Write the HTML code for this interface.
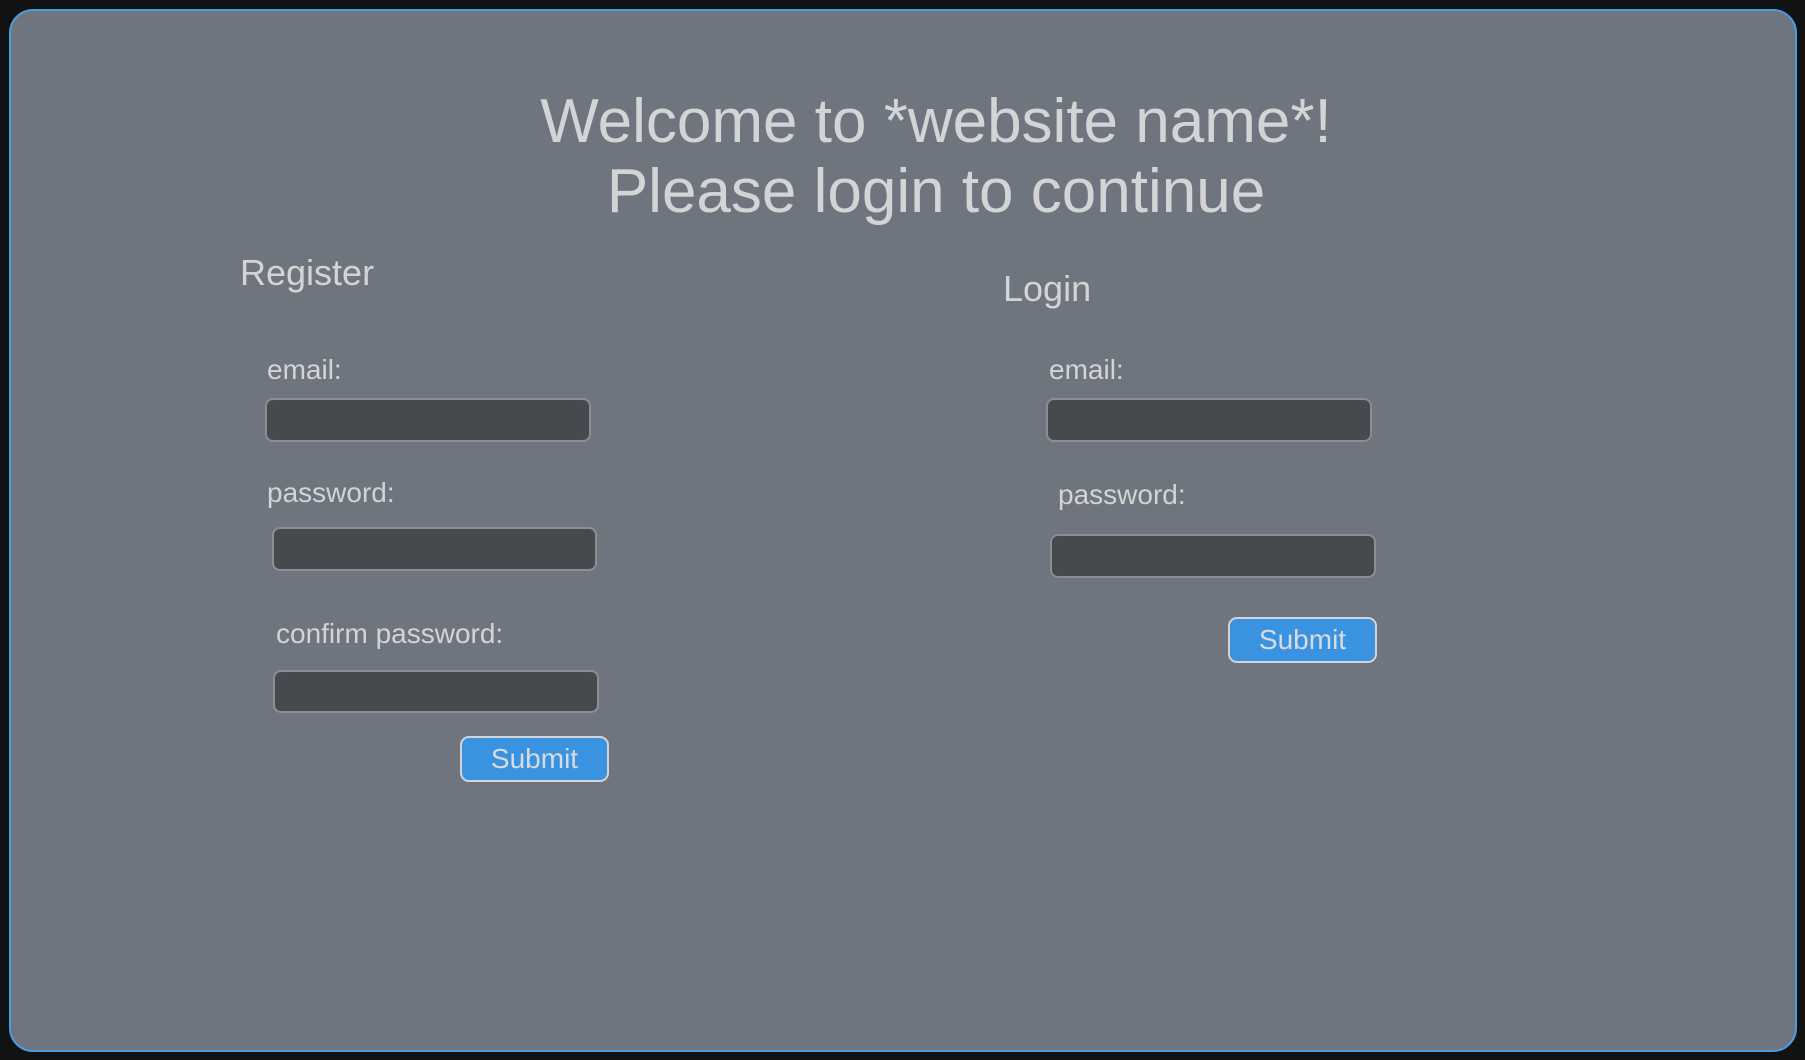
<!DOCTYPE html>
<html><head><meta charset="utf-8"><style>
html,body{margin:0;padding:0;background:#111212;width:1805px;height:1060px;overflow:hidden;font-family:"Liberation Sans",Arial,sans-serif;color:#d3d4d6}
.frame{position:absolute;left:9px;top:9px;width:1784px;height:1039px;border:2px solid #4a9be0;border-radius:24px;background:#6f757e}
.t{position:absolute;white-space:nowrap;line-height:normal}
.title{font-size:62px;left:436px;width:1000px;text-align:center}
.h{font-size:36px}
.l{font-size:28px}
.in{position:absolute;background:#464a4f;border:2px solid #8b8e93;border-radius:8px;box-sizing:border-box}
.btn{position:absolute;background:#3a93e0;border:2px solid #d3d3d5;border-radius:9px;box-sizing:border-box;font-size:28px;text-align:center;color:#d8dade}
</style></head><body>
<div class="frame"></div>
<div class="t title" style="top:86px">Welcome to *website name*!</div>
<div class="t title" style="top:156px">Please login to continue</div>

<div class="t h" style="left:240px;top:252px">Register</div>
<div class="t l" style="left:267px;top:354px">email:</div>
<div class="in" style="left:265px;top:398px;width:326px;height:44px"></div>
<div class="t l" style="left:267px;top:477px">password:</div>
<div class="in" style="left:272px;top:527px;width:325px;height:44px"></div>
<div class="t l" style="left:276px;top:618px">confirm password:</div>
<div class="in" style="left:273px;top:670px;width:326px;height:43px"></div>
<div class="btn" style="left:460px;top:736px;width:149px;height:46px;line-height:42px">Submit</div>

<div class="t h" style="left:1003px;top:268px">Login</div>
<div class="t l" style="left:1049px;top:354px">email:</div>
<div class="in" style="left:1046px;top:398px;width:326px;height:44px"></div>
<div class="t l" style="left:1058px;top:479px">password:</div>
<div class="in" style="left:1050px;top:534px;width:326px;height:44px"></div>
<div class="btn" style="left:1228px;top:617px;width:149px;height:46px;line-height:42px">Submit</div>
</body></html>
